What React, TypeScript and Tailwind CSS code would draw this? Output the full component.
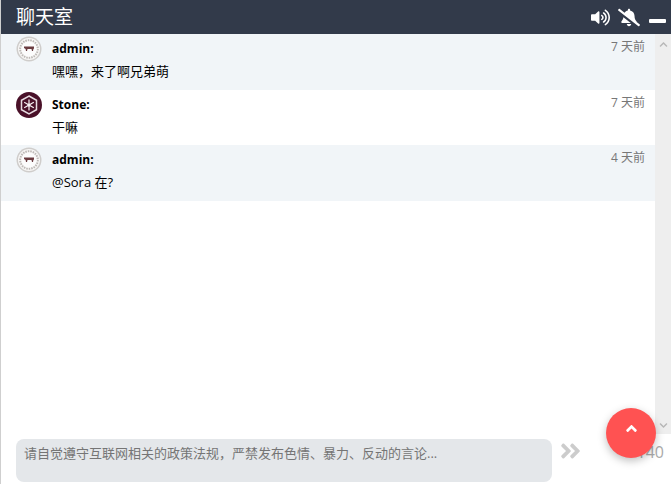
import { FaAngleDoubleRight, FaAngleUp, FaBellSlash, FaChevronDown, FaChevronUp, FaVolumeUp } from "react-icons/fa";

const messages = [
  { name: "admin:", text: "嘿嘿，来了啊兄弟萌", time: "7 天前", avatar: "admin", shaded: true },
  { name: "Stone:", text: "干嘛", time: "7 天前", avatar: "stone", shaded: false },
  { name: "admin:", text: "@Sora 在?", time: "4 天前", avatar: "admin", shaded: true },
];

function AdminAvatar() {
  return (
    <svg aria-hidden="true" className="h-[26px] w-[26px]" viewBox="0 0 26 26">
      <circle cx="13" cy="13" r="12.500" fill="#cfcdcb" />
      <circle cx="13" cy="13" r="11" fill="#f7f6f5" />
      <circle cx="13" cy="13" r="8.800" fill="none" stroke="#bdb9b6" strokeWidth="2" strokeDasharray="1.500 1" />
      <circle cx="13" cy="13" r="7.500" fill="#fcfcfc" />
      <path d="M8 10.500h10v2l-.6.500-.4 2h-1l-.5-2h-4l-.5 2h-1l-.4-2-1.600-1v-1.500Z" fill="#6b3c40" />
    </svg>
  );
}

function StoneAvatar() {
  return (
    <svg aria-hidden="true" className="h-[26px] w-[26px]" viewBox="0 0 26 26">
      <circle cx="13" cy="13" r="13" fill="#4a1129" />
      <path d="M13 4 20.500 8.300v9.400L13 22l-7.500-4.300V8.300L13 4Z" fill="none" stroke="#e8dde2" strokeWidth="1.500" />
      <path d="M13 7.500v11M8.200 10.200l9.600 5.600M17.800 10.200l-9.600 5.600" stroke="#f8f2f4" strokeWidth="1.200" />
      <circle cx="13" cy="13" r="1.500" fill="#f8f2f4" />
    </svg>
  );
}

export default function App() {
  return (
    <div className="relative flex h-[484px] w-[671px] flex-col overflow-hidden border-l border-[#cfcfcf] bg-white font-['Open_Sans','Noto_Sans_CJK_SC',sans-serif]">
      <header className="flex h-[34px] shrink-0 items-center justify-between bg-[#323a4a] pl-[15px] pr-[5px] text-white">
        <h1 className="text-[19px] leading-[34px] font-normal">聊天室</h1>
        <div className="flex items-center">
          <FaVolumeUp className="h-[19px] w-[19px]" />
          <FaBellSlash className="ml-[8px] h-[19px] w-[22px]" />
          <span className="mt-[8px] ml-[9px] h-[4px] w-[17px] rounded-[1px] bg-white" />
        </div>
      </header>

      <div className="flex h-[400px] shrink-0">
        <ul className="min-w-0 flex-1">
          {messages.map((m, i) => (
            <li
              className={`flex h-[55.500px] pt-[2px] pr-[10px] pl-[15px] ${m.shaded ? "bg-[#f1f5f8]" : "bg-white"}`}
              key={i}
            >
              <div className="w-[36px] shrink-0">{m.avatar === "admin" ? <AdminAvatar /> : <StoneAvatar />}</div>
              <div className="min-w-0 flex-1 pt-[3px]">
                <p className="text-[12px] leading-[20px] font-bold text-black">{m.name}</p>
                <p className="mt-[2px] text-[13px] leading-[20px] text-black">{m.text}</p>
              </div>
              <span className="pt-[1px] text-[12px] leading-[20px] text-[#777]">{m.time}</span>
            </li>
          ))}
        </ul>
        <div className="flex w-[16px] shrink-0 flex-col items-center justify-between bg-[#eeeeee] pt-[6px] pb-[4px] text-[#b8b8b8]">
          <FaChevronUp className="h-[9px] w-[9px]" />
          <FaChevronDown className="h-[9px] w-[9px]" />
        </div>
      </div>

      <div className="flex items-start pt-[5px] pl-[15px]">
        <div className="h-[43px] w-[536px] rounded-[8px] bg-[#e4e7ea] px-[8px] pt-[4px] text-[13px] leading-[20px] text-[#757575]">
          请自觉遵守互联网相关的政策法规，严禁发布色情、暴力、反动的言论...
        </div>
        <FaAngleDoubleRight className="ml-[8px] h-[24px] w-[21px] text-[#cccccc]" />
        <span className="ml-auto pt-[3px] pr-[7px] text-[16px] leading-[20px] text-[#aaa]">140</span>
      </div>

      <button
        className="absolute top-[408px] left-[605px] flex h-[50px] w-[50px] items-center justify-center rounded-full bg-[#ff5252] text-white shadow-[0_3px_8px_rgba(0,0,0,0.25)]"
        type="button"
      >
        <FaAngleUp className="mb-[9px] h-[17px] w-[17px]" />
      </button>
    </div>
  );
}
